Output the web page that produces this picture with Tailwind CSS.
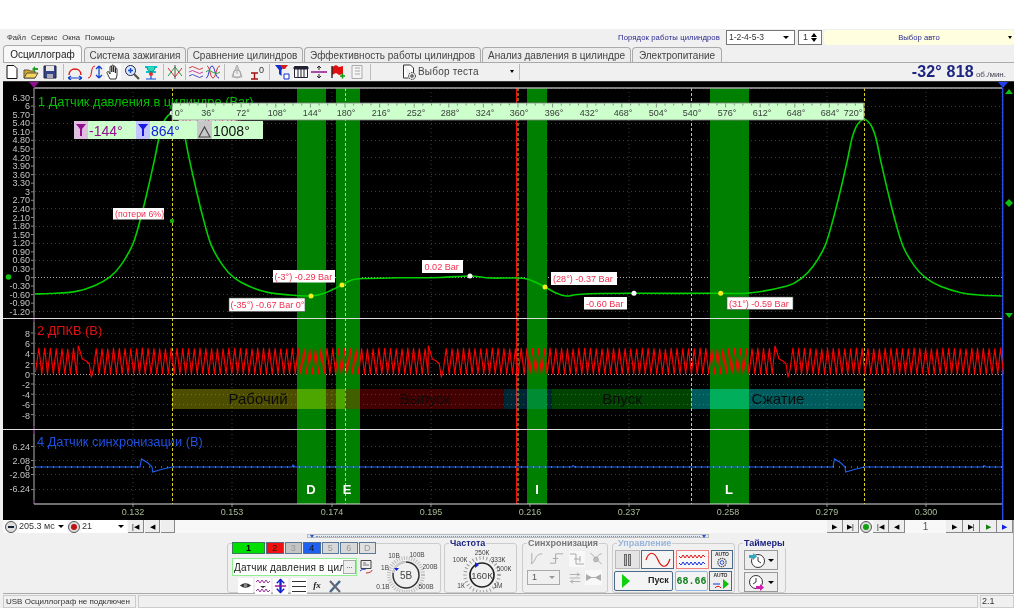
<!DOCTYPE html>
<html lang="ru"><head><meta charset="utf-8"><title>Осциллограф</title>
<script src="https://cdn.jsdelivr.net/npm/@tailwindcss/browser@4"></script></head>
<body class="bg-white m-0 overflow-hidden font-['Liberation_Sans',sans-serif] text-[#333]">
<div class="w-[1024px] h-[611px] pt-[29px] overflow-hidden blur-[0.35px]">
<div class="w-[1014px] ml-0 pl-[3px] bg-[#f0f0f0] h-[579px] flex flex-col">

<!-- menu row -->
<div class="h-[16px] flex items-center text-[7.700px] flex-none pt-[1px]">
  <div class="w-[120px] flex gap-[5px] pl-[4px] text-[#333]"><span>Файл</span><span>Сервис</span><span>Окна</span><span>Помощь</span></div>
  <span class="ml-[495px] text-[#2a2a90] w-[103px] whitespace-nowrap tracking-[0.1px]">Порядок работы цилиндров</span>
  <div class="ml-[5px] w-[69px] h-[15px] bg-white border border-[#777] flex items-center justify-between px-[2px] text-[8.500px]"><span>1-2-4-5-3</span><span class="w-0 h-0 border-x-[3px] border-x-transparent border-t-[3px] border-t-black mr-[3px]"></span></div>
  <div class="ml-[3px] w-[24px] h-[15px] bg-white border border-[#777] flex items-center justify-between px-[4px] text-[9px]"><span>1</span><span class="flex flex-col gap-[1px]"><span class="block w-0 h-0 border-x-[3px] border-x-transparent border-b-[4px] border-b-black"></span><span class="block w-0 h-0 border-x-[3px] border-x-transparent border-t-[4px] border-t-black"></span></span></div>
  <div class="ml-[2px] w-[190px] h-[15px] bg-[#ffffe0] rounded-sm flex items-center justify-center relative text-[#2a2a90]">Выбор авто<span class="absolute right-[2px] top-[6px] w-0 h-0 border-x-[2px] border-x-transparent border-t-[3px] border-t-black"></span></div>
</div>

<!-- tabs -->
<div class="h-[17px] flex items-end gap-[1px] text-[10px] flex-none text-[#444]">
  <div class="w-[79px] h-[17px] bg-[#f8f8f8] border border-b-0 border-[#aaa] rounded-t-sm flex items-center justify-center text-[#222]">Осциллограф</div>
  <div class="ml-[1px] w-[102px] h-[15px] bg-[#ececec] border border-b-0 border-[#aaa] rounded-t-sm flex items-center justify-center">Система зажигания</div>
  <div class="w-[116px] h-[15px] bg-[#ececec] border border-b-0 border-[#aaa] rounded-t-sm flex items-center justify-center">Сравнение цилиндров</div>
  <div class="w-[177px] h-[15px] bg-[#ececec] border border-b-0 border-[#aaa] rounded-t-sm flex items-center justify-center">Эффективность работы цилиндров</div>
  <div class="w-[149px] h-[15px] bg-[#ececec] border border-b-0 border-[#aaa] rounded-t-sm flex items-center justify-center">Анализ давления в цилиндре</div>
  <div class="w-[90px] h-[15px] bg-[#ececec] border border-b-0 border-[#aaa] rounded-t-sm flex items-center justify-center">Электропитание</div>
</div>

<!-- toolbar -->
<div class="h-[19px] flex items-center flex-none border-t border-[#aaa] bg-[#f0f0f0] pl-[1px] pb-[1px]">
  <svg class="w-4 h-4 flex-none" viewBox="0 0 16 16"><path d="M3 1.500h7l3 3v10H3z" fill="#fff" stroke="#111"/></svg>
  <svg class="w-4 h-4 flex-none ml-[3px]" viewBox="0 0 16 16"><path d="M1 14V6h5l1 1h5v7z" fill="#d8a820" stroke="#554"/><path d="M1 14l3-5h11l-3 5z" fill="#f5d560" stroke="#554"/><path d="M9 5l3-3v2h3v2h-3v2z" fill="#20a020"/></svg>
  <svg class="w-4 h-4 flex-none ml-[3px]" viewBox="0 0 16 16"><path d="M2 2h12v12H2z" fill="#334488" stroke="#223"/><path d="M4 2h8v5H4z" fill="#e8e8e8"/><path d="M5 10h6v4H5z" fill="#aab"/></svg>
  <span class="w-px h-[16px] bg-[#bbb] ml-[5px] flex-none"></span>
  <svg class="w-4 h-4 flex-none ml-[3px]" viewBox="0 0 16 16" fill="none"><path d="M2 11C2 3 14 3 14 11" stroke="#e01010" stroke-width="1.400"/><path d="M1 14h14M1 14l3-2M1 14l3 2M15 14l-3-2M15 14l-3 2" stroke="#1040d0" stroke-width="1.200"/></svg>
  <svg class="w-4 h-4 flex-none ml-[4px]" viewBox="0 0 16 16" fill="none"><path d="M1 14C6 14 3 2 8 2" stroke="#e01010"/><path d="M12 2v12M12 2l-3 3M12 2l3 3M12 14l-3-3M12 14l3-3" stroke="#1040d0" stroke-width="1.300"/></svg>
  <svg class="w-4 h-4 flex-none ml-[2px] bg-[#fafafa]" viewBox="0 0 16 16" fill="#fff" stroke="#222" stroke-width=".9"><path d="M5 15L2 9c-.6-1.300 1-2 2-.8L5 10V3c0-1.300 1.800-1.300 1.800 0v5V2c0-1.300 1.800-1.300 1.800 0v6V3c0-1.300 1.800-1.300 1.800 0v6-4c0-1.200 1.600-1.200 1.600 0v6l-1 4z"/></svg>
  <svg class="w-4 h-4 flex-none ml-[3px]" viewBox="0 0 16 16" fill="none"><circle cx="6.500" cy="6.500" r="5" fill="#dfe8ff" stroke="#224"/><path d="M4 6.500h5M6.500 4v5" stroke="#1050d0" stroke-width="1.500"/><path d="M10 10l5 5" stroke="#554" stroke-width="2.200"/></svg>
  <svg class="w-4 h-4 flex-none ml-[3px]" viewBox="0 0 16 16" fill="none"><path d="M2 3h12M3 8h10" stroke="#00c8c8" stroke-width="2"/><path d="M4 3c0 6 8 6 8 0" fill="#30d8c0" stroke="#009080"/><circle cx="8" cy="10" r="2" fill="#e03030"/><path d="M8 12v3M3 15h10" stroke="#1050d0" stroke-width="1.200"/></svg>
  <span class="w-px h-[16px] bg-[#bbb] ml-[4px] flex-none"></span>
  <svg class="w-4 h-4 flex-none ml-[3px]" viewBox="0 0 16 16" fill="none"><path d="M1 12L8 3l7 9" stroke="#20a040"/><path d="M1 4l7 9 7-9" stroke="#d03030"/><path d="M8 1v14" stroke="#555"/></svg>
  <span class="w-px h-[16px] bg-[#bbb] ml-[2px] flex-none"></span>
  <svg class="w-4 h-4 flex-none ml-[2px]" viewBox="0 0 16 16" fill="none"><path d="M1 4q3.500-3 7 0t7 0" stroke="#d04040"/><path d="M1 8q3.500-3 7 0t7 0" stroke="#d040a0"/><path d="M1 12q3.500-3 7 0t7 0" stroke="#5050d0"/></svg>
  <svg class="w-4 h-4 flex-none ml-[1px]" viewBox="0 0 16 16" fill="none"><path d="M1 14C4 14 4 2 7 2s3 12 7 12" stroke="#3030d0"/><path d="M2 2c3 0 3 12 6 12s3-12 7-12" stroke="#d03030"/><path d="M1 8c4-5 8 5 14 0" stroke="#20a040"/></svg>
  <span class="w-px h-[16px] bg-[#bbb] ml-[3px] flex-none"></span>
  <svg class="w-4 h-4 flex-none ml-[4px]" viewBox="0 0 16 16" fill="none" stroke="#aaa"><path d="M8 1L3 13h10z" fill="#eee"/><circle cx="8" cy="10" r="4"/><path d="M8 3v7"/></svg>
  <svg class="w-4 h-4 flex-none ml-[4px]" viewBox="0 0 16 16" fill="none"><path d="M2 9h7M2 15h7M5.500 9v6" stroke="#a01010" stroke-width="1.400"/><text x="10" y="9" font-size="9" fill="#333" stroke="none">0</text></svg>
  <span class="w-px h-[16px] bg-[#bbb] ml-[4px] flex-none"></span>
  <svg class="w-4 h-4 flex-none ml-[4px]" viewBox="0 0 16 16"><path d="M1 1h10L7.500 6v6L5 10V6z" fill="#1030d0"/><path d="M6 1h8l-3 4H9z" fill="#d02020"/><path d="M10 10h5v5h-5z" fill="#fff" stroke="#1030d0"/></svg>
  <svg class="w-4 h-4 flex-none ml-[3px] bg-[#fafafa]" viewBox="0 0 16 16" fill="none" stroke="#223"><path d="M1.500 2.500h13v11h-13z"/><path d="M1 3h14v2H1z" fill="#223"/><path d="M5 5v9M8 5v9M11 5v9"/></svg>
  <svg class="w-4 h-4 flex-none ml-[2px]" viewBox="0 0 16 16" fill="none"><path d="M0 8h16" stroke="#901090" stroke-width="1.500"/><path d="M8 2v4M6 4l2-2 2 2M8 14v-4M6 12l2 2 2-2" stroke="#222"/></svg>
  <svg class="w-4 h-4 flex-none ml-[3px]" viewBox="0 0 16 16"><path d="M2 12V3l4-2 3 2 4-1v8l-4 1-3-2-4 2z" fill="#e01010"/><path d="M2 2v12" stroke="#222" stroke-width="1.400"/><path d="M10 12h5M12.500 9.500v5" stroke="#10a010" stroke-width="1.600"/></svg>
  <svg class="w-4 h-4 flex-none ml-[3px]" viewBox="0 0 16 16" fill="#f4f4f4" stroke="#aaa"><path d="M3 1.500h10v13H3z"/><path d="M6 4h5M6 7h5M6 10h5" fill="none"/></svg>
  <span class="w-px h-[16px] bg-[#bbb] ml-[5px] flex-none"></span>
  <svg class="w-4 h-4 flex-none ml-[30px]" viewBox="0 0 16 16" fill="none" stroke="#333"><path d="M2.500 1h7l3 3v5M2.500 1v13h5" fill="#fff"/><circle cx="11" cy="12" r="3.500" fill="#ddd" stroke-dasharray="1.500 1"/><circle cx="11" cy="12" r="1.200"/></svg>
  <span class="ml-[1px] w-[92px] text-[10px] tracking-[0.2px] text-[#444]">Выбор теста</span>
  <span class="w-0 h-0 border-x-[2px] border-x-transparent border-t-[3px] border-t-black ml-0"></span>
  <span class="w-px h-[16px] bg-[#bbb] ml-[5px] flex-none"></span>
  <span class="ml-auto mr-[8px] flex items-baseline"><b class="text-[16px] text-[#1c2480] tracking-[0.2px]">-32° 818</b><span class="text-[8px] ml-[2px] text-[#445]">об./мин.</span></span>
</div>

<!-- chart -->
<svg class="block flex-none w-[1011px] h-[439px]" viewBox="3 81 1011 439" font-family="Liberation Sans, sans-serif">
  <rect x="3" y="81" width="1011" height="439" fill="#000"/>
  <g id="grid" fill="none"></g>
  <g fill="#008000"><rect x="297" y="88" width="29" height="416"/><rect x="336" y="88" width="24" height="416"/><rect x="527" y="88" width="20" height="416"/><rect x="710" y="88" width="39" height="416"/></g>
  <g stroke="#e0d020" stroke-dasharray="3 2" fill="none"><path d="M172.500 88V504M345.500 88V504M518 88V504M691.500 88V504M864.500 88V504"/></g>
  <path d="M516.500 88V504" stroke="#f01010"/>
  <path d="M3 81H1014" stroke="#777"/>
  <path d="M34 88H1002" stroke="#aaa" stroke-width="1.300"/>
  <path d="M34 88V504" stroke="#777" stroke-width="1.500"/>
  <path d="M34 316V322M34 426V434M34 500V504" stroke="#602060" stroke-width="1.500"/>
  <path d="M3 318.500H1003M3 429.500H1003M34 504H1003" stroke="#ddd" stroke-width="1.100"/>
  <path d="M1002.700 88V520" stroke="#3050f0" stroke-width="1.300"/>
  <path d="M29 82h10l-5 6z" fill="#901090"/><path d="M998 82h10l-5 6z" fill="#2040f0"/>
  <path d="M1005 94l4-5 4 5zM1005 313l4 5 4-5z" fill="#10c010"/><path d="M1009 199l4 4-4 4-4-4z" fill="#10c010"/>
  <circle cx="8.500" cy="277" r="2.800" fill="#10c010"/>
  <!-- phases -->
  <g><rect x="172" y="389" width="173" height="20" fill="#ffff00" fill-opacity=".3"/><rect x="345" y="389" width="159" height="20" fill="#ff0000" fill-opacity=".26"/><rect x="504" y="389" width="48" height="20" fill="#00c0ff" fill-opacity=".2"/><rect x="552" y="389" width="139" height="20" fill="#00ff00" fill-opacity=".26"/><rect x="691" y="389" width="173" height="20" fill="#00ffff" fill-opacity=".36"/></g>
  <g font-size="15" fill="#0c0c0c" text-anchor="middle"><text x="258" y="404">Рабочий</text><text x="425" y="404">Выпуск</text><text x="622" y="404">Впуск</text><text x="778" y="404">Сжатие</text></g>
  <!-- y labels -->
  <g font-size="9" fill="#c4c4c4" text-anchor="end">
    <text x="30" y="100.500">6.30</text><text x="30" y="109">6</text><text x="30" y="117.500">5.70</text><text x="30" y="126">5.40</text><text x="30" y="134.500">5.10</text><text x="30" y="143">4.80</text><text x="30" y="152">4.50</text><text x="30" y="160.500">4.20</text><text x="30" y="169">3.90</text><text x="30" y="177.500">3.60</text><text x="30" y="186">3.30</text><text x="30" y="194.500">3</text><text x="30" y="203">2.70</text><text x="30" y="212">2.40</text><text x="30" y="220.500">2.10</text><text x="30" y="229">1.80</text><text x="30" y="237.500">1.50</text><text x="30" y="246">1.20</text><text x="30" y="254.500">0.90</text><text x="30" y="263">0.60</text><text x="30" y="271.500">0.30</text><text x="30" y="280.500">0</text><text x="30" y="289">-0.30</text><text x="30" y="297.500">-0.60</text><text x="30" y="306">-0.90</text><text x="30" y="314.500">-1.20</text>
    <text x="30" y="337">8</text><text x="30" y="347">6</text><text x="30" y="357">4</text><text x="30" y="367.500">2</text><text x="30" y="377.500">0</text><text x="30" y="387.500">-2</text><text x="30" y="398">-4</text><text x="30" y="408">-6</text><text x="30" y="418.500">-8</text>
    <text x="30" y="449.500">6.24</text><text x="30" y="463.500">2.08</text><text x="30" y="470.500">0</text><text x="30" y="478">-2.08</text><text x="30" y="492">-6.24</text>
  </g>
  <g font-size="12.800"><text x="38" y="106" fill="#00c000">1 Датчик давления в цилиндре (Bar)</text><text x="37" y="335" fill="#e01010">2 ДПКВ (В)</text><text x="37" y="446" fill="#2050e0">4 Датчик синхронизации (В)</text></g>
  <!-- traces -->
  <path id="red" fill="none" stroke="#ff0000" stroke-width="1.150" stroke-linejoin="round"/>
  <path id="blue" fill="none" stroke="#2060f0" stroke-width="1.100"/>
  <path d="M35 467H1002" stroke="#ddd" stroke-dasharray="1 5" opacity=".8"/>
  <path id="green" fill="none" stroke="#00d000" stroke-width="1.600"/>
  <!-- band letters -->
  <g font-size="13" font-weight="700" fill="#fff" text-anchor="middle"><text x="311" y="494">D</text><text x="347" y="494">E</text><text x="537" y="494">I</text><text x="729" y="494">L</text></g>
  <!-- x labels -->
  <g font-size="9" fill="#a8bc98" text-anchor="middle"><text x="133" y="515">0.132</text><text x="232" y="515">0.153</text><text x="332" y="515">0.174</text><text x="431" y="515">0.195</text><text x="530" y="515">0.216</text><text x="629" y="515">0.237</text><text x="728" y="515">0.258</text><text x="827" y="515">0.279</text><text x="926" y="515">0.300</text></g>
  <!-- hidden label -->
  <rect x="178.500" y="115.500" width="58" height="8" fill="#fff" stroke="#333" stroke-width=".7"/>
  <text x="182" y="124" font-size="10" fill="#f03050">(0°) -5.75 Bar</text>
  <circle cx="172" cy="113" r="2.300" fill="#fff"/>
  <!-- ruler -->
  <rect x="172" y="103" width="692" height="17" fill="#ccffcc" stroke="#888" stroke-width=".8"/>
  <path id="rticks" stroke="#666" stroke-width=".7" fill="none"/>
  <g font-size="9" fill="#3a3a3a" text-anchor="middle"><text x="179" y="116">0°</text><text x="208" y="116">36°</text><text x="243" y="116">72°</text><text x="277" y="116">108°</text><text x="312" y="116">144°</text><text x="346" y="116">180°</text><text x="381" y="116">216°</text><text x="416" y="116">252°</text><text x="450" y="116">288°</text><text x="485" y="116">324°</text><text x="519" y="116">360°</text><text x="554" y="116">396°</text><text x="589" y="116">432°</text><text x="623" y="116">468°</text><text x="658" y="116">504°</text><text x="692" y="116">540°</text><text x="727" y="116">576°</text><text x="762" y="116">612°</text><text x="796" y="116">648°</text><text x="830" y="116">684°</text><text x="853" y="116">720°</text></g>
  <!-- angle box -->
  <rect x="74" y="121" width="189" height="18" fill="#ccffcc"/>
  <rect x="74" y="121" width="14" height="18" fill="#e0c0e0"/><rect x="136" y="121" width="14" height="18" fill="#c4c4ff"/><rect x="197" y="121" width="15" height="18" fill="#c8c8c8"/>
  <path d="M76 124h10l-4 5v7h-2v-7z" fill="#901090"/><path d="M138 124h10l-4 5v7h-2v-7z" fill="#1818e0"/><path d="M199 137l5.500-10 5.500 10z" fill="none" stroke="#444" stroke-width="1.100"/>
  <g font-size="14"><text x="89" y="135.500" fill="#901090">-144°</text><text x="151" y="135.500" fill="#1818e0">864°</text><text x="213" y="135.500" fill="#111">1008°</text></g>
  <!-- value labels -->
  <g fill="#fff" stroke="#555" stroke-width=".6"><rect x="273" y="270" width="62" height="12.500" stroke="none"/><rect x="229" y="298" width="76" height="13.500"/><rect x="422" y="260" width="41" height="13" stroke="none"/><rect x="551" y="272" width="66" height="13" stroke="none"/><rect x="584" y="297" width="43" height="12.500" stroke="none"/><rect x="727" y="297" width="66" height="12.500"/><rect x="113" y="208" width="51" height="11.500" stroke="none"/></g>
  <g font-size="9.100" fill="#f03050"><text x="274.500" y="280">(-3°) -0.29 Bar</text><text x="230.500" y="308">(-35°) -0.67 Bar 0°</text><text x="424.500" y="270">0.02 Bar</text><text x="553" y="282">(28°) -0.37 Bar</text><text x="586" y="306.500">-0.60 Bar</text><text x="729" y="306.500">(31°) -0.59 Bar</text><text x="115" y="217" font-size="8.800">(потери 6%)</text></g>
  <g fill="#f0f020"><circle cx="311" cy="296" r="2.500"/><circle cx="342" cy="285" r="2.500"/><circle cx="545" cy="287" r="2.500"/><circle cx="720.700" cy="293.300" r="2.500"/></g>
  <g fill="#fff"><circle cx="470" cy="276" r="2.500"/><circle cx="634" cy="293.300" r="2.500"/></g>
  <circle cx="172" cy="221" r="2.200" fill="#10b010"/>
</svg>

<!-- nav row -->
<div class="h-[13px] flex items-center flex-none text-[9px] bg-[#f8f8f8] border-r border-[#aaa]">
  <span class="ml-[2px] w-[12px] h-[12px] rounded-full border border-[#555] bg-[#ddd] flex items-center justify-center"><span class="w-[6px] h-[2px] bg-[#123]"></span></span>
  <span class="ml-[2px] w-[48px] bg-white h-[13px] flex items-center justify-between pr-[3px]">205.3 мс<span class="w-0 h-0 border-x-[3px] border-x-transparent border-t-[3px] border-t-black"></span></span>
  <span class="ml-[1px] w-[12px] h-[12px] rounded-full border border-[#555] bg-[#ddd] flex items-center justify-center"><span class="w-[6px] h-[6px] rounded-full bg-[#c01010]"></span></span>
  <span class="ml-[2px] w-[45px] bg-white h-[13px] flex items-center justify-between pr-[3px]">21<span class="w-0 h-0 border-x-[3px] border-x-transparent border-t-[3px] border-t-black"></span></span>
  <span class="ml-[1px] w-[16px] h-[13px] bg-[#eee] border-r border-b border-[#888] flex items-center justify-center text-[7px] text-black leading-none">|◀</span>
  <span class="ml-[1px] w-[15px] h-[13px] bg-[#eee] border-r border-b border-[#888] flex items-center justify-center text-[7px] text-black leading-none">◀</span>
  <span class="ml-[1px] w-[14px] h-[13px] bg-[#eee] border-r border-b border-[#888]"></span>
  <span class="ml-auto w-[16px] h-[13px] bg-[#eee] border-r border-b border-[#888] flex items-center justify-center text-[7px] text-black leading-none">▶</span>
  <span class="w-[16px] h-[13px] bg-[#eee] border-r border-b border-[#888] flex items-center justify-center text-[7px] text-black leading-none">▶|</span>
  <span class="w-[12px] h-[12px] ml-[1px] rounded-full border border-[#555] bg-[#ddd] flex items-center justify-center"><span class="w-[6px] h-[6px] rounded-full bg-[#10a010]"></span></span>
  <span class="ml-[1px] w-[16px] h-[13px] bg-[#eee] border-r border-b border-[#888] flex items-center justify-center text-[7px] text-black leading-none">|◀</span>
  <span class="w-[16px] h-[13px] bg-[#eee] border-r border-b border-[#888] flex items-center justify-center text-[7px] text-black leading-none">◀</span>
  <span class="w-[41px] text-center text-[10px] text-[#555]">1</span>
  <span class="w-[17px] h-[13px] bg-[#eee] border-r border-b border-[#888] flex items-center justify-center text-[7px] text-black leading-none">▶</span>
  <span class="w-[17px] h-[13px] bg-[#eee] border-r border-b border-[#888] flex items-center justify-center text-[7px] text-black leading-none">▶|</span>
  <span class="w-[17px] h-[13px] bg-[#eee] border-r border-b border-[#888] flex items-center justify-center text-[7px] text-[#108010] leading-none">▶</span>
  <span class="w-[16px] h-[13px] bg-[#eee] border-r border-b border-[#888] flex items-center justify-center text-[7px] text-[#1020e0] leading-none">▶</span>
</div>

<!-- bottom area -->
<div class="h-[61px] flex-none border-r border-b border-[#aaa] relative">
  <!-- scrollbar -->
  <div class="absolute left-[304px] top-[1px] w-[402px] h-[4px] bg-[#e4ecf8] border border-[#bbb] flex items-center justify-between px-[2px]"><span class="w-0 h-0 border-x-[2px] border-x-transparent border-t-[3px] border-t-[#2050d0]"></span><span class="flex-1 mx-[2px] border-t border-dotted border-[#7090d0]"></span><span class="w-0 h-0 border-x-[2px] border-x-transparent border-t-[3px] border-t-[#2050d0]"></span></div>

  <div class="flex pt-[10px] pl-[224px] h-full">
    <!-- channel panel -->
    <div class="w-[214px] h-[50px] border border-[#ccc] rounded-[3px] flex flex-none">
      <div class="w-[148px] pl-[4px] -mt-[2px] flex-none">
        <div class="flex gap-[1px] h-[12px] text-[9px] text-center leading-[11px]">
          <span class="w-[34px] bg-[#00e000] border border-[#3a7a5a] text-black font-bold">1</span>
          <span class="w-[18px] bg-[#f01010] border border-[#5a6a8a] text-[#222]">2</span>
          <span class="w-[18px] bg-[#c4c4c4] border border-[#5a7a9a] text-[#999]">3</span>
          <span class="w-[18px] bg-[#2060f0] border border-[#4a6a9a] text-[#111]">4</span>
          <span class="w-[18px] bg-[#d8d8d8] border border-[#5a7a9a] text-[#999]">5</span>
          <span class="w-[18px] bg-[#d8d8d8] border border-[#5a7a9a] text-[#999]">6</span>
          <span class="w-[18px] bg-[#e0e0e0] border border-[#5a7a9a] text-[#999]">D</span>
        </div>
        <div class="flex items-center mt-[4px] h-[18px]">
          <div class="w-[125px] h-[18px] bg-white border border-[#90f090] flex items-center overflow-hidden">
            <span class="w-[110px] pl-[1px] text-[10px] tracking-[0.2px] text-[#222] overflow-hidden whitespace-nowrap">Датчик давления в цилиндре</span>
            <span class="w-[13px] h-[14px] bg-[#eee] border border-[#aaa] text-[8px] leading-[10px] text-center flex-none">...</span>
          </div>
          <svg class="w-[14px] h-[16px] ml-[2px] flex-none" viewBox="0 0 14 16" fill="none"><path d="M2 1.500h10v8H2z" fill="#eee" stroke="#444"/><path d="M4 4h3M4 6h6" stroke="#777"/><path d="M1 12a6 3 0 0 1 6-2" stroke="#2040d0"/><path d="M7 14a6 3 0 0 0 6-3" stroke="#d02020"/></svg>
        </div>
        <div class="flex items-center h-[17px] pl-[6px] gap-[2px] mt-[1px]">
          <svg class="w-[15px] h-[15px] bg-white" viewBox="0 0 16 16"><path d="M2 8q6-5 12 0q-6 5-12 0z" fill="#333"/><circle cx="8" cy="8" r="2" fill="#888"/></svg>
          <svg class="w-[16px] h-[16px] bg-white" viewBox="0 0 16 16" fill="none" stroke="#a030a0"><path d="M1 4l2-2 2 3 2-3 2 3 2-3 2 3 2-2M1 13l2-2 2 3 2-3 2 3 2-3 2 3 2-2"/><path d="M5 8h6l-3 2z" fill="#333" stroke="none"/></svg>
          <svg class="w-[15px] h-[16px] bg-white" viewBox="0 0 16 16" fill="none"><path d="M8 1v14" stroke="#1020d0" stroke-width="2.500"/><path d="M4 5l4-4 4 4M4 11l4 4 4-4" stroke="#1020d0" stroke-width="1.500"/><path d="M2 8h12" stroke="#901090" stroke-width="1.500"/></svg>
          <svg class="w-[16px] h-[16px] bg-white ml-[1px]" viewBox="0 0 16 16" fill="none" stroke="#333"><path d="M1 3.500h14M1 8.500h14M1 13.500h14"/></svg>
          <span class="w-[16px] text-center text-[9px] italic font-bold text-[#222] font-['Liberation_Serif',serif]">fx</span>
          <svg class="w-[16px] h-[16px]" viewBox="0 0 16 16" fill="none"><path d="M3 14L13 3" stroke="#4a6a8a" stroke-width="2.500"/><path d="M3 3l10 11" stroke="#667" stroke-width="2"/></svg>
        </div>
      </div>
      <svg class="w-[64px] h-[48px] flex-none" viewBox="377 544 64 48" font-size="6.500" fill="#444" font-family="Liberation Sans, sans-serif">
        <circle cx="407" cy="575" r="17" fill="none" stroke="#bbb" stroke-width="4" stroke-dasharray="1 1.500"/>
        <circle cx="407" cy="575" r="13" fill="#f0f0f0" stroke="#333" stroke-width="1.500"/>
        <path d="M394 573a13 13 0 0 1 13-11" fill="none" stroke="#ccc" stroke-width="2"/>
        <path d="M395 568h5l-2.500 3z" fill="#1020e0"/>
        <text x="407" y="579" text-anchor="middle" font-size="10">5В</text>
        <text x="395" y="558" text-anchor="middle">10В</text><text x="418" y="557" text-anchor="middle">100В</text><text x="431" y="569" text-anchor="middle">200В</text><text x="427" y="589" text-anchor="middle">500В</text><text x="384" y="589" text-anchor="middle">0.1В</text><text x="386" y="570" text-anchor="middle">1В</text>
      </svg>
    </div>
    <!-- freq -->
    <div class="ml-[3px] w-[73px] h-[50px] border border-[#ccc] rounded-[3px] flex-none">
      <div class="-mt-[6px] ml-[4px] w-fit px-px bg-[#f0f0f0] text-[9px] leading-[10px] font-bold text-[#1c2480]">Частота</div>
      <svg class="w-[71px] h-[44px]" viewBox="445 548 71 44" font-size="6.500" fill="#444" font-family="Liberation Sans, sans-serif">
        <circle cx="482" cy="575" r="17" fill="none" stroke="#999" stroke-width="3.500" stroke-dasharray="1 2.500"/>
        <circle cx="482" cy="575" r="12" fill="#f0f0f0" stroke="#222" stroke-width="1.700"/>
        <path d="M475 562v6l4-3z" fill="#1020e0"/>
        <text x="482" y="578.500" text-anchor="middle" font-size="9.500">160К</text>
        <text x="460" y="562" text-anchor="middle">100К</text><text x="482" y="555" text-anchor="middle">250К</text><text x="498" y="562" text-anchor="middle">333К</text><text x="504" y="571" text-anchor="middle">500К</text><text x="461" y="588" text-anchor="middle">1К</text><text x="498" y="588" text-anchor="middle">1М</text>
      </svg>
    </div>
    <!-- sync -->
    <div class="ml-[5px] w-[86px] h-[50px] border border-[#ccc] rounded-[3px] flex-none">
      <div class="-mt-[6px] ml-[4px] w-fit px-px bg-[#f0f0f0] text-[9px] leading-[10px] font-bold text-[#777]">Синхронизация</div>
      <div class="flex items-center gap-[3px] pl-[6px] mt-[2px] h-[17px]">
        <svg class="w-[15px] h-[15px]" viewBox="0 0 16 16" fill="none" stroke="#aaa"><path d="M2 13c6 0 3-10 12-10M3 2v12"/></svg>
        <svg class="w-[15px] h-[15px] ml-[2px]" viewBox="0 0 16 16" fill="none" stroke="#aaa"><path d="M1 13h6V3h8M4 8h6M7 5v6"/></svg>
        <svg class="w-[16px] h-[16px] ml-[2px] bg-[#f8f8f8]" viewBox="0 0 16 16" fill="none" stroke="#aaa"><path d="M1 3h6v10h8M5 8h6M11 5v6"/></svg>
        <svg class="w-[16px] h-[15px]" viewBox="0 0 16 16" fill="none" stroke="#aaa"><path d="M2 2l12 12M6 12c2-2 2-8 8-9"/><circle cx="8" cy="9" r="2.500" fill="#bbb"/></svg>
      </div>
      <div class="flex items-center pl-[4px] mt-[3px]">
        <span class="w-[33px] h-[15px] border border-[#aaa] flex items-center justify-between px-[4px] text-[9px] text-[#555]">1<span class="w-0 h-0 border-x-[3px] border-x-transparent border-t-[3px] border-t-[#999]"></span></span>
        <svg class="w-[14px] h-[14px] ml-[8px]" viewBox="0 0 16 16" fill="none" stroke="#aaa"><path d="M2 4h12M2 8h12M2 12h12M10 2l3 2-3 2M6 10l-3 2 3 2"/></svg>
        <svg class="w-[17px] h-[15px] ml-[3px] bg-[#f8f8f8]" viewBox="0 0 17 16" fill="#aaa" stroke="#aaa"><path d="M1 5l5 3-5 3zM16 5l-5 3 5 3zM1 8h15"/></svg>
      </div>
    </div>
    <!-- control -->
    <div class="ml-[4px] w-[123px] h-[50px] border border-[#ccc] rounded-[3px] flex-none">
      <div class="-mt-[6px] ml-[4px] w-fit px-px bg-[#f0f0f0] text-[9px] leading-[10px] font-bold text-[#98b4d8]">Управление</div>
      <div class="flex gap-[1px] pl-[2px] mt-[2px]">
        <span class="w-[25px] h-[19px] bg-[#e4e4e4] border border-[#bbb] flex items-center justify-center gap-[1px]"><span class="w-[3px] h-[12px] border border-[#666] bg-[#bbb]"></span><span class="w-[3px] h-[12px] border border-[#666] bg-[#bbb]"></span></span>
        <span class="w-[33px] h-[19px] bg-[#f4f4f4] border border-[#4a6a8a] flex items-center justify-center"><svg class="w-[26px] h-[15px]" viewBox="0 0 26 15" fill="none" stroke="#e01010" stroke-width="1.200"><path d="M1 8c3-9 8-9 12 0s9 8 12-1"/></svg></span>
        <span class="ml-[1px] w-[33px] h-[19px] bg-[#f8f8f8] border border-[#f08080] flex items-center justify-center"><svg class="w-[30px] h-[15px]" viewBox="0 0 30 15" fill="none"><path d="M1 4l2 2 2-3 2 3 2-3 2 3 2-3 2 3 2-3 2 3 2-3 2 3 2-3 2 2" stroke="#e01010"/><path d="M1 11l2 2 2-3 2 3 2-3 2 3 2-3 2 3 2-3 2 3 2-3 2 3 2-3 2 2" stroke="#1030e0"/></svg></span>
        <span class="ml-[1px] w-[22px] h-[19px] bg-[#eee] border border-[#4a6a8a] flex flex-col items-center text-[5px] font-bold leading-[6px] text-[#333]">АUТО<svg class="w-[12px] h-[12px]" viewBox="0 0 12 12" fill="none"><circle cx="6" cy="6" r="4.500" stroke="#555" stroke-width="1.500" stroke-dasharray="1.500 .8"/><circle cx="6" cy="6" r="2" stroke="#2040d0"/></svg></span>
      </div>
      <div class="flex pl-[1px] mt-[2px]">
        <span class="w-[59px] h-[20px] bg-[#f4f4f4] border border-[#4a6a8a] rounded-[2px] flex items-center text-[9px] font-bold text-[#222]"><span class="ml-[7px] w-0 h-0 border-y-[7px] border-y-transparent border-l-[8px] border-l-[#10d010]"></span><span class="ml-[18px]">Пуск</span></span>
        <span class="ml-[2px] w-[33px] h-[20px] bg-[#f4f4f4] border border-[#90b8e0] rounded-[2px] flex items-center justify-center text-[10px] font-bold text-[#108020] font-['Liberation_Mono',monospace]">68.66</span>
        <span class="ml-[1px] w-[23px] h-[20px] bg-[#eee] border border-[#4a6a8a] flex flex-col items-center text-[5px] font-bold leading-[6px] text-[#333]">АUТО<svg class="w-[18px] h-[12px]" viewBox="0 0 18 12"><path d="M3 10a4 5 0 0 1 6 0" fill="none" stroke="#e01010"/><path d="M1 6h7" stroke="#1030e0"/><path d="M11 1v10l6-5z" fill="#10c010"/></svg></span>
      </div>
    </div>
    <!-- timers -->
    <div class="ml-[3px] w-[48px] h-[50px] border border-[#ccc] rounded-[3px] flex-none">
      <div class="-mt-[6px] ml-[4px] w-fit px-px bg-[#f0f0f0] text-[9px] leading-[10px] font-bold text-[#1c2480]">Таймеры</div>
      <div class="ml-[5px] mt-[2px] w-[34px] h-[20px] bg-[#eee] border border-[#999] flex items-center justify-center gap-[2px]"><svg class="w-[18px] h-[17px]" viewBox="0 0 18 17" fill="none"><circle cx="10" cy="9" r="6.500" fill="#fff" stroke="#333"/><path d="M10 5v4l3 2" stroke="#333"/><path d="M1 3h4V1l4 3.500L5 8V6H1z" fill="#30a8c0"/></svg><span class="w-0 h-0 border-x-[3px] border-x-transparent border-t-[3px] border-t-black"></span></div>
      <div class="ml-[5px] mt-[2px] w-[34px] h-[20px] bg-[#eee] border border-[#999] flex items-center justify-center gap-[2px]"><svg class="w-[18px] h-[17px]" viewBox="0 0 18 17" fill="none"><circle cx="8" cy="8" r="6.500" fill="#fff" stroke="#333"/><path d="M8 4v4l-3 2" stroke="#333"/><path d="M8 12h4v-2l4 3.500-4 3.500v-2H8z" fill="#d020b0"/></svg><span class="w-0 h-0 border-x-[3px] border-x-transparent border-t-[3px] border-t-black"></span></div>
    </div>
  </div>
</div>

<!-- status -->
<div class="h-[13px] mt-[1px] flex-none flex gap-[1px] text-[8px] text-[#333]">
  <div class="w-[133px] border border-[#ccc] bg-[#f0f0f0] flex items-center pl-[2px] whitespace-nowrap">USB Осциллограф не подключен</div>
  <div class="w-[841px] border border-[#ccc] ml-[1px]"></div>
  <div class="w-[34px] border border-[#ccc] ml-[1px] flex items-center pl-[1px] text-[9px]">2.1</div>
</div>
</div></div>

<script>
function spline(p){let d='M'+p[0][0]+' '+p[0][1];for(let i=0;i<p.length-1;i++){const a=p[Math.max(i-1,0)],b=p[i],c=p[i+1],e=p[Math.min(i+2,p.length-1)];d+=' C'+(b[0]+(c[0]-a[0])/6).toFixed(1)+' '+(b[1]+(c[1]-a[1])/6).toFixed(1)+' '+(c[0]-(e[0]-b[0])/6).toFixed(1)+' '+(c[1]-(e[1]-b[1])/6).toFixed(1)+' '+c[0]+' '+c[1];}return d;}
const pk=[[0,0],[4,2.500],[8,8],[12,19],[17,42.7],[24,72.7],[30.7,99],[39,126],[50.7,146],[62,157.7],[77,166],[97,172],[115,174.300]];
function peak(cx,top,base,dir,lim){const out=[];const sc=(base-top)/174.3;for(const q of pk){if(q[0]>lim)break;out.push([cx+dir*q[0],+(top+q[1]*sc).toFixed(1)]);}return out;}
let g=[[35,294],[50,293.500]];
g=g.concat(peak(172,113,294,-1,110).reverse());
g=g.concat(peak(172,113,295,1,97).slice(1));
g=g.concat([[290,295],[311,296],[325,293],[342,285],[352,280],[363,278.500],[400,277.800],[440,277.500],[470,276],[490,278],[517,278],[527,279],[535,282],[545,287],[556,293],[566,296],[578,294.500],[600,293.500],[634,293.300],[720,293.300],[749,293]]);
g=g.concat(peak(864,119,294.500,-1,97).reverse().slice(1));
g=g.concat(peak(864,119,295,1,115).slice(1));
g=g.concat([[1002,296]]);
document.getElementById('green').setAttribute('d',spline(g));

// crank-sensor waveform
const per=5.77,gaps=[78.3,428.3,775];
let path='M35.5 372';
let cur=36;
while(cur<1002){
  const gp=gaps.find(v=>cur>=v-per/2&&cur<v+15);
  if(gp!==undefined){
    path+=' L'+gp+' 346 L'+(gp+2)+' 352 L'+(gp+4)+' 359 L'+(gp+8)+' 361 L'+(gp+11)+' 364 L'+(gp+13)+' 377 L'+(gp+15)+' 370';
    cur=gp+15;continue;
  }
  path+=' L'+(cur+per/2).toFixed(1)+' '+(348+((cur*7)%2)*.5).toFixed(1)+' L'+(cur+per).toFixed(1)+' 374';
  cur+=per;
}
document.getElementById('red').setAttribute('d',path);

// sync trace
document.getElementById('blue').setAttribute('d','M35 467H140L141.500 459L148 463L152 467L152.700 472L163 469L172 467H292L293 465L295 467H572L573 465.500L575 467H833L834.500 459L841 463L845 467L845.700 472L856 469L865 467H983L984 465.500L986 467H1002');

// grid
let gd='';
for(const v of [133,232,332,431,530,629,728,827,926,1002]) gd+='M'+v+' 88V318M'+v+' 319V429M'+v+' 430V504';
for(let i=1;i<13;i++){const y=277-i*17.14; gd+='M35 '+y.toFixed(0)+'.5H1002';}
for(let i=1;i<3;i++) gd+='M35 '+(277+i*17.14).toFixed(0)+'.5H1002';
for(const y of [333,343,353,363,384,394,404,415,446,460,474,489]) gd+='M35 '+y+'.5H1002';
let ticks='';
for(let i=0;i<26;i++) ticks+='M31 '+(97.5+i*8.57).toFixed(1)+'h3';
for(let i=0;i<9;i++) ticks+='M31 '+(333+i*10.2).toFixed(1)+'h3';
for(const y of [446,460,467,474,489]) ticks+='M31 '+y+'.5h3';
for(const v of [133,232,332,431,530,629,728,827,926]) ticks+='M'+v+' 504v3';
document.getElementById('grid').innerHTML='<path d="'+gd+'" stroke="#3c3c3c" stroke-dasharray="1 3"/><path d="M35 277.5H1002M35 374.5H1002" stroke="#aaa" stroke-dasharray="1 2"/><path d="'+ticks+'" stroke="#888"/>';
let rt='';for(let i=0;i<=80;i++){const X=172+i*8.65;rt+='M'+X.toFixed(1)+' 103.5v'+(i%4==0?4:2);}
document.getElementById('rticks').setAttribute('d',rt);
</script>
</body></html>
